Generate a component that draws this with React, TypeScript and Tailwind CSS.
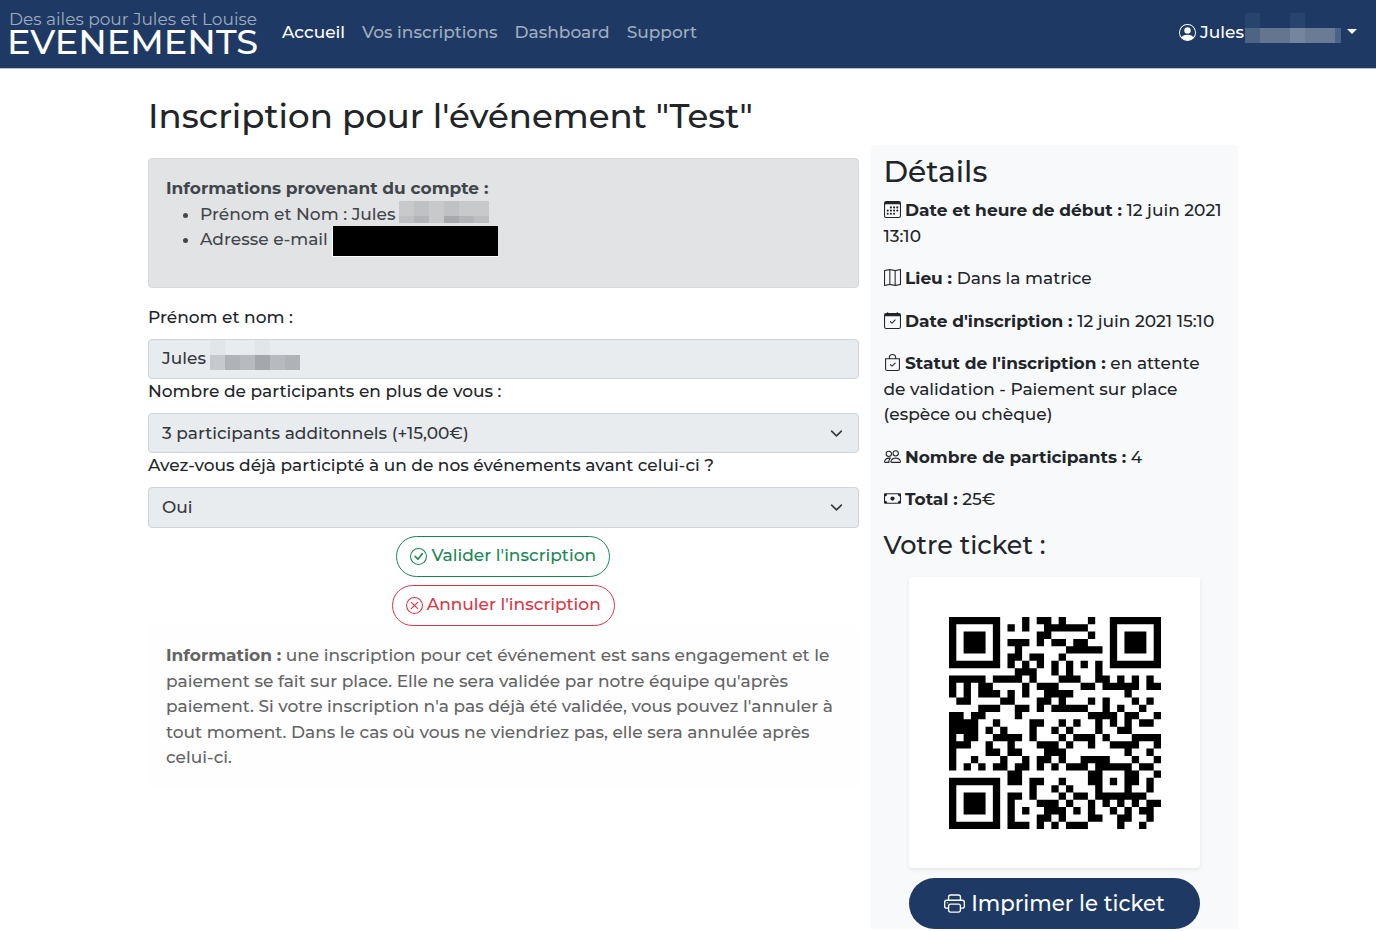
import React from "react";
import {
  BsBagCheck,
  BsCalendar3,
  BsCalendarCheck,
  BsCash,
  BsCheckCircle,
  BsMap,
  BsPeople,
  BsPersonCircle,
  BsPrinter,
  BsXCircle,
} from "react-icons/bs";

const QR = [
  "11111110001011010001001111111",
  "10000010101001111110001000001",
  "10111010000011000001001011101",
  "10111010111010110110001011101",
  "10111010010000001111101011101",
  "10000010110110010000001000001",
  "11111110101010101010101111111",
  "00000000011100101000100000000",
  "11111011110100011100110101010",
  "10101100001011100011011111011",
  "10101110101001111000000010000",
  "01100001100011010001010001010",
  "00001110011010111110010100100",
  "11011000010000000001111011001",
  "11110010000110010100101010110",
  "11110101000100101000100110000",
  "10110011110100010111010001111",
  "11100100100011101001001111001",
  "10000110110001110000000010010",
  "10010001001011010011110001001",
  "10101011011010101110111110110",
  "00000000110000000001100011001",
  "11111110110110010001101011010",
  "10000010000100101000100010010",
  "10111010110100010110111111100",
  "10111010100011101001010101011",
  "10111010101001110101001010110",
  "10000010100011010001100110010",
  "11111110111010101110000100100",
];

const QR_PATH = QR.flatMap((row, y) =>
  [...row.matchAll(/1+/g)].map((run) => `M${run.index} ${y}h${run[0].length}v1h-${run[0].length}z`),
).join("");

function QrCode() {
  return (
    <svg className="size-[212px]" viewBox="0 0 29 29">
      <path d={QR_PATH} fill="#000" />
    </svg>
  );
}

function Chevron() {
  return (
    <svg className="size-[13px]" viewBox="0 0 16 16" fill="none" stroke="#343a40" strokeWidth="2" strokeLinecap="round" strokeLinejoin="round">
      <path d="M2 5l6 6 6-6" />
    </svg>
  );
}

function Field({ label, children, select }: { label: string; children: React.ReactNode; select?: boolean }) {
  return (
    <div>
      <div className="h-[25.5px] whitespace-nowrap">{label}</div>
      <div className="mt-[8.5px] flex h-[40.4px] items-center justify-between rounded-[4px] border border-[#ced4da] bg-[#e9ecef] pl-[13px] pr-[15px] text-[#33383d]">
        <div className="flex items-center whitespace-nowrap">{children}</div>
        {select && <Chevron />}
      </div>
    </div>
  );
}

function Detail({ icon, title, children }: { icon: React.ReactNode; title: React.ReactNode; children: React.ReactNode }) {
  return (
    <p className="mb-[17px] whitespace-nowrap [&_svg]:mr-[4.5px] [&_svg]:inline [&_svg]:size-[17px] [&_svg]:align-[-2px]">
      {icon}
      {title} {children}
    </p>
  );
}

export default function App() {
  return (
    <div className="h-[931px] overflow-hidden bg-white font-['Montserrat','Inter',sans-serif] text-[17px] leading-[25.5px] font-medium text-[#212529]">
      <nav className="flex h-[68.5px] items-center border-b border-[#b4bfcd] bg-[#1e3a64] pr-[19px] pl-[9px] text-[#a0adbf]">
        <svg className="h-[50px] w-[250px] overflow-visible" viewBox="0 0 250 50" fontFamily="Montserrat, Inter, sans-serif">
          <text x="0" y="16" fontSize="16.5" fontWeight="400" fill="#9eacbf" textLength="248" lengthAdjust="spacingAndGlyphs">Des ailes pour Jules et Louise</text>
          <text x="-2" y="45" fontSize="33.5" fontWeight="500" fill="#fff" textLength="251" lengthAdjust="spacingAndGlyphs">EVENEMENTS</text>
        </svg>
        <div className="ml-[23px] flex gap-[17px] pb-[3px] whitespace-nowrap">
          <span className="text-white">Accueil</span>
          <span>Vos inscriptions</span>
          <span>Dashboard</span>
          <span>Support</span>
        </div>
        <div className="ml-auto flex items-center pb-[3px] text-white">
          <BsPersonCircle className="mr-[4px] size-[17px]" />
          <span>Jules</span>
          <svg className="mb-[9px] ml-px h-[30px] w-[96px]" viewBox="0 0 96 30" shapeRendering="crispEdges">
            <path fill="#27446d" d="M0 0h15v15H0zM45 0h15v15H45z" />
            <path fill="#4d6485" d="M0 15h15v15H0z" />
            <path fill="#64768f" d="M15 15h30v15H15z" />
            <path fill="#74869e" d="M45 15h15v15H45z" />
            <path fill="#697b95" d="M60 15h30v15H60z" />
            <path fill="#4b6384" d="M90 15h6v15h-6z" />
          </svg>
          <span className="mb-[2px] ml-[6px] border-x-[5px] border-t-[5px] border-x-transparent border-t-white" />
        </div>
      </nav>

      <main className="flex pl-[148px]">
        <div className="w-[710.5px] pt-[27.3px]">
          <h1 className="h-[41px] text-[34px] leading-[41px] whitespace-nowrap">Inscription pour l'événement "Test"</h1>
          <section className="mt-[21.5px] h-[130px] rounded-[4px] border border-[#d6d8db] bg-[#e2e3e5] px-[17px] pt-[17px] text-[#41464b]">
            <b className="block font-bold whitespace-nowrap">Informations provenant du compte :</b>
            <ul className="list-disc pl-[34px] whitespace-nowrap">
              <li>
                <div className="flex h-[25.5px]">
                  <span>Prénom et Nom : Jules</span>
                  <svg className="-mt-px ml-[3px] h-[22px] w-[90px]" viewBox="0 0 90 22" shapeRendering="crispEdges">
                    <path fill="#c8c9cb" d="M0 0h90v22H0z" />
                    <path fill="#c0c1c4" d="M15 0h15v15H15zM45 0h15v15H45zM0 15h15v7H0z" />
                    <path fill="#b4b5b9" d="M15 15h15v7H15zM60 15h15v7H60z" />
                    <path fill="#a8a9ad" d="M45 15h15v7H45z" />
                    <path fill="#bdbec1" d="M75 15h15v7H75z" />
                  </svg>
                </div>
              </li>
              <li>
                <div className="flex h-[25.5px]">
                  <span>Adresse e-mail</span>
                  <span className="-mt-px ml-[4px] h-[31px] w-[166px] border-b border-l border-white bg-black" />
                </div>
              </li>
            </ul>
          </section>

          <div className="mt-[16.4px]">
            <Field label="Prénom et nom :">
              Jules
              <svg className="mb-[8px] ml-[4px] h-[30px] w-[103px]" viewBox="0 0 103 30" shapeRendering="crispEdges">
                <path fill="#e3e6e9" d="M0 0h15v15H0zM45 0h15v15H45z" />
                <path fill="#c6c9cd" d="M0 15h15v15H0z" />
                <path fill="#afb2b6" d="M15 15h15v15H15zM75 15h15v15H75z" />
                <path fill="#b7babe" d="M30 15h15v15H30zM60 15h15v15H60z" />
                <path fill="#a4a8ac" d="M45 15h15v15H45z" />
              </svg>
            </Field>
            <Field label="Nombre de participants en plus de vous :" select>
              3 participants additonnels (+15,00€)
            </Field>
            <Field label="Avez-vous déjà participté à un de nos événements avant celui-ci ?" select>
              Oui
            </Field>
          </div>

          <div className="mt-[8.5px] flex flex-col items-center gap-[8.5px] whitespace-nowrap">
            <button className="flex h-[40.5px] w-[214px] items-center justify-center gap-[4px] rounded-full border border-[#198754] pb-px text-[#198754]">
              <BsCheckCircle className="size-[17px]" />
              Valider l'inscription
            </button>
            <button className="flex h-[40.5px] w-[223.5px] items-center justify-center gap-[4px] rounded-full border border-[#dc3545] pb-px text-[#dc3545]">
              <BsXCircle className="size-[17px]" />
              Annuler l'inscription
            </button>
          </div>

          <p className="h-[162px] rounded-[4px] bg-[#fefefe] px-[18px] pt-[17.5px] whitespace-nowrap text-[#636464]">
            <b className="font-bold">Information :</b> une inscription pour cet événement est sans engagement et le
            <br />
            paiement se fait sur place. Elle ne sera validée par notre équipe qu'après
            <br />
            paiement. Si votre inscription n'a pas déjà été validée, vous pouvez l'annuler à
            <br />
            tout moment. Dans le cas où vous ne viendriez pas, elle sera annulée après
            <br />
            celui-ci.
          </p>
        </div>

        <aside className="mt-[76.5px] ml-[12.5px] h-[784px] w-[367px] rounded-t-[4px] bg-[#f8f9fb] px-[12.5px] pt-[9.2px]">
          <h2 className="mb-[8.5px] h-[35.7px] text-[29.75px] leading-[35.7px]">Détails</h2>
          <Detail icon={<BsCalendar3 />} title={<b>Date et heure de début :</b>}>
            <span>12 juin 2021</span>
            <br />
            13:10
          </Detail>
          <Detail icon={<BsMap />} title={<b>Lieu :</b>}>Dans la matrice</Detail>
          <Detail icon={<BsCalendarCheck />} title={<b>Date d'inscription :</b>}>12 juin 2021 15:10</Detail>
          <Detail icon={<BsBagCheck />} title={<b>Statut de l'inscription :</b>}>
            en attente
            <br />
            de validation - Paiement sur place
            <br />
            (espèce ou chèque)
          </Detail>
          <Detail icon={<BsPeople />} title={<b>Nombre de participants :</b>}>4</Detail>
          <Detail icon={<BsCash />} title={<b>Total :</b>}>25€</Detail>
          <h3 className="h-[30.6px] text-[25.5px] leading-[30.6px]">Votre ticket :</h3>
          <div className="mx-auto mt-[17px] flex size-[291px] items-center justify-center rounded-[4px] bg-white shadow-[0_2px_4px_rgba(0,0,0,0.075)]">
            <QrCode />
          </div>
          <button className="mx-auto mt-[9.5px] flex h-[51px] w-[291px] items-center justify-center gap-[6px] rounded-full bg-[#1e3a64] text-[21.25px] whitespace-nowrap text-white">
            <BsPrinter className="size-[21px]" />
            Imprimer le ticket
          </button>
        </aside>
      </main>
    </div>
  );
}
